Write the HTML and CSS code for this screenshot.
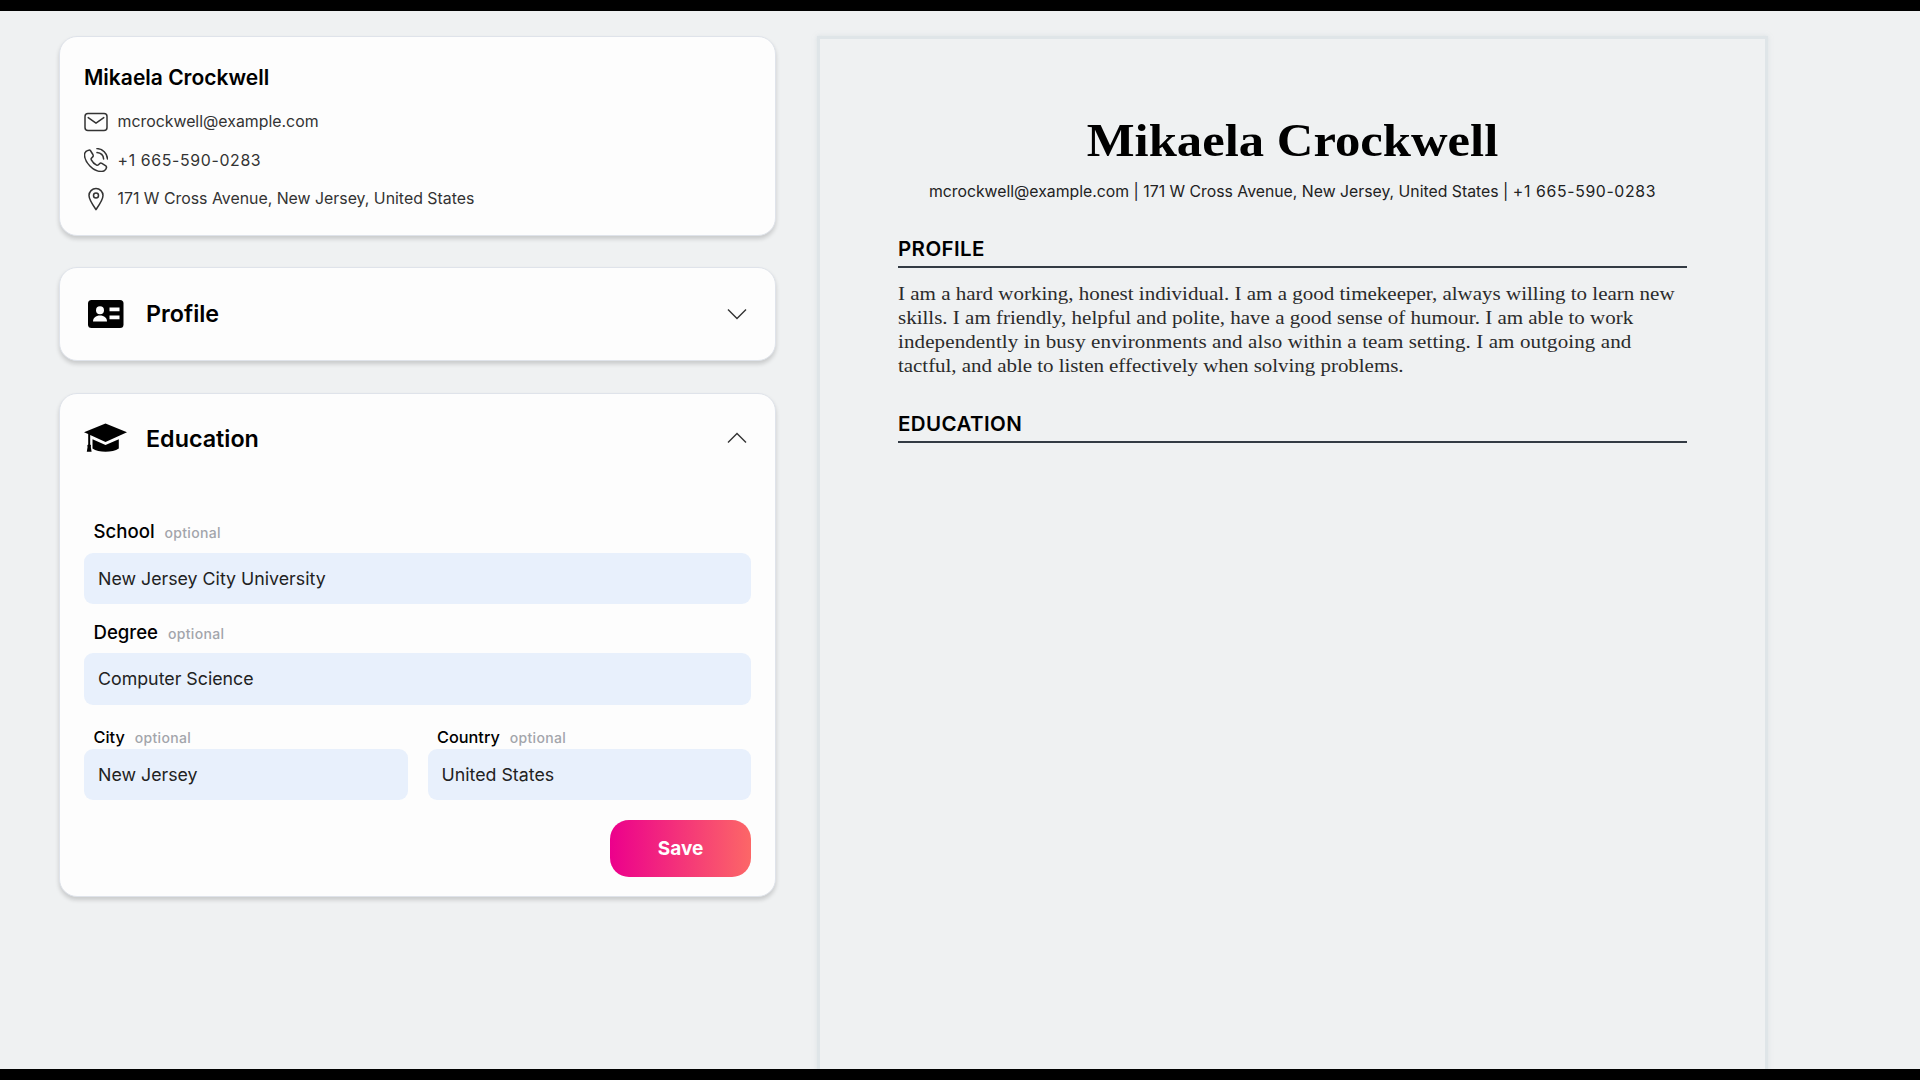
FILE: index.html
```
<!DOCTYPE html>
<html lang="en">
<head>
<meta charset="utf-8">
<title>Resume builder</title>
<link rel="stylesheet" href="styles.css">
</head>
<body>
<main class="app">
  <section class="editor">
    <article class="card contact">
      <h2 class="contact-name">Mikaela Crockwell</h2>
      <ul class="contact-list">
        <li><svg class="icon" viewBox="0 0 24 24"><rect x="1" y="3.6" width="22" height="16.8" rx="3"/><path d="M4.2 7.6 12 13.2l7.8-5.6"/></svg><span>mcrockwell@example.com</span></li>
        <li><svg class="icon" viewBox="0 0 24 24"><path d="M4.600 2.200C2 2.800 .4 4.600.5 7.200.9 14.500 9 23.200 17 23.500c2.800.1 5.100-1.900 5.500-4 .1-.7-.1-1.200-.7-1.600l-3.900-2.500c-.9-.5-1.700-.4-2.400.3l-1.300 1.300c-.5.4-1 .4-1.600.1-2.300-1.200-4.100-3-5.300-5.300-.3-.6-.3-1.100.1-1.600L8.700 8.900c.6-.7.7-1.500.2-2.400L6.700 3C6.200 2.200 5.600 1.900 4.600 2.200Z"/><path d="M13 .6c5.700.3 10.100 4.700 10.500 10.300M13 4.600c3.700.3 6.300 2.800 6.600 6.300"/></svg><span class="phone">+1 665-590-0283</span></li>
        <li><svg class="icon" viewBox="0 0 24 24"><path d="M12 22.600C9.500 19 5 12.900 5 8.600a7 7 0 0 1 14 0c0 4.300-4.500 10.400-7 14Z"/><circle cx="12" cy="8.500" r="2.500"/></svg><span>171 W Cross Avenue, New Jersey, United States</span></li>
      </ul>
    </article>

    <article class="card">
      <header class="card-head profile-head">
        <svg class="glyph" viewBox="0 0 44 44"><rect x="4" y="8" width="35.500" height="28" rx="3.500"/><g class="cut"><circle cx="16" cy="18.300" r="4"/><path d="M9 29.500c0-3.600 2.800-6 7-6s7 2.400 7 6Z"/><path d="M25.500 15.500h10v3.700h-10zM25.500 23.500h10v3.700h-10z"/></g></svg>
        <h2 class="card-title">Profile</h2>
        <svg class="chevron" viewBox="0 0 20 20"><path d="M1 5.500 10 14.500 19 5.500"/></svg>
      </header>
    </article>

    <article class="card">
      <header class="card-head">
        <svg class="glyph" viewBox="0 0 44 44"><path d="M21.500 7.500 43 16.300 21.500 26 6.200 19v9.500c1 .6 1 1.400.6 2.300l.8 5H2.800l.8-5c-.5-.9-.4-1.700.6-2.300V18L0 16.300Z"/><path d="M8.500 23.200 21.500 29l13.300-5.800v9.300C28.500 36.800 14.500 36.800 8.500 32.500Z"/></svg>
        <h2 class="card-title">Education</h2>
        <svg class="chevron" viewBox="0 0 20 20"><path d="M1 14.500 10 5.500 19 14.500"/></svg>
      </header>
      <form class="form">
        <label class="field"><span class="label">School<small>optional</small></span><span class="input">New Jersey City University</span></label>
        <label class="field"><span class="label">Degree<small>optional</small></span><span class="input">Computer Science</span></label>
        <div class="pair">
          <label class="field compact"><span class="label">City<small>optional</small></span><span class="input">New Jersey</span></label>
          <label class="field compact"><span class="label">Country<small>optional</small></span><span class="input">United States</span></label>
        </div>
        <button class="save" type="button">Save</button>
      </form>
    </article>
  </section>

  <section class="paper">
    <h1 class="paper-name">Mikaela Crockwell</h1>
    <p class="paper-contact">mcrockwell@example.com | 171 W Cross Avenue, New Jersey, United States | <span class="phone">+1 665-590-0283</span></p>
    <h3 class="paper-heading">PROFILE</h3>
    <p class="paper-text">I am a hard working, honest individual. I am a good timekeeper, always willing to learn new<br>skills. I am friendly, helpful and polite, have a good sense of humour. I am able to work<br><span class="loose">independently in busy environments and also within a team setting. I am outgoing and</span><br><span class="tight">tactful, and able to listen effectively when solving problems.</span></p>
    <h3 class="paper-heading">EDUCATION</h3>
  </section>
</main>
</body>
</html>
```
FILE: styles.css
```
* { box-sizing: border-box; }
body {
  margin: 0;
  height: 1080px;
  overflow: hidden;
  border-top: 11px solid #000;
  border-bottom: 11px solid #000;
  background: #eff1f2;
  color: #000;
  font-family: Inter, sans-serif;
}
h1, h2, h3, p, ul { margin: 0; padding: 0; }
.app { display: flex; height: 1058px; padding: 25px 0 0 59px; gap: 41px; overflow: hidden; }
.editor { width: 717px; display: flex; flex-direction: column; gap: 31.5px; }
.card {
  padding: 0 24px;
  background: #fdfdfd;
  border: 1px solid #dfe3ea;
  border-radius: 18px;
  box-shadow: 0 3px 4px rgba(0, 0, 0, .16);
}
.contact { height: 199.5px; padding-top: 26px; }
.contact-name { font-size: 21px; line-height: 30px; font-weight: 600; }
.contact-list { list-style: none; margin-top: 9.5px; color: #333; font-size: 15.87px; }
.contact-list li { display: flex; align-items: center; gap: 9.5px; height: 38.5px; }
.phone { letter-spacing: .65px; }
.icon { width: 24px; height: 24px; fill: none; stroke: #333; stroke-width: 1.5; stroke-linecap: round; stroke-linejoin: round; }
.card-head { display: flex; align-items: center; height: 91px; padding-bottom: 2px; }
.profile-head { height: 92px; padding-bottom: 1px; }
.glyph { width: 44px; height: 44px; }
.cut { fill: #fdfdfd; }
.card-title { margin-left: 18px; flex: 1; font-size: 23.3px; font-weight: 600; }
.chevron { width: 20px; height: 20px; margin-right: 4px; fill: none; stroke: #333; stroke-width: 1.4; }
.form { display: flex; flex-direction: column; padding: 31px 0 19px; }
.field { display: flex; flex-direction: column; }
.label { display: flex; align-items: baseline; gap: 10px; height: 37px; padding: 3.5px 9.5px 0; font-size: 18.6px; line-height: 24px; font-weight: 500; }
.label small { font-size: 14px; letter-spacing: .3px; color: #a3a5ab; }
.input { display: flex; align-items: center; height: 51.5px; padding-left: 14px; border-radius: 9px; background: #e8f0fc; color: #222; font-size: 17.8px; }
.field + .field { margin-top: 12px; }
.pair { display: grid; grid-template-columns: 1fr 1fr; gap: 20px; margin-top: 20px; }
.pair .field { margin: 0; }
.compact .label { height: 24px; padding-top: 0; font-size: 16.3px; }
.save { align-self: flex-end; width: 141px; height: 57.5px; margin-top: 19.5px; border: 0; border-radius: 19px; background: linear-gradient(90deg, #ec008c, #fc6767); color: #fff; font: 700 19px Inter, sans-serif; }
.paper { width: 951px; height: 1100px; padding: 74px 78px; border: 3px solid #dfe5e8; box-shadow: 0 0 4px rgba(200, 210, 216, .5); }
.paper-name { font: 700 46.5px/56px "Liberation Serif", serif; text-align: center; transform: scaleX(1.09); }
.paper-contact { margin-top: 11px; font-size: 15.8px; line-height: 24px; text-align: center; color: #222; white-space: nowrap; }
.paper-heading { margin-top: 31px; height: 33px; border-bottom: 2px solid #333b44; font-size: 20.5px; line-height: 28px; font-weight: 600; letter-spacing: .4px; }
.paper-text { margin-top: 14px; font: 19.5px/24px "Liberation Serif", serif; color: #2b2b2b; white-space: nowrap; transform: scaleX(1.077); transform-origin: left; }
.paper-text + .paper-heading { margin-top: 32px; }
.loose { letter-spacing: .1px; }
.tight { letter-spacing: -.04px; }
```
